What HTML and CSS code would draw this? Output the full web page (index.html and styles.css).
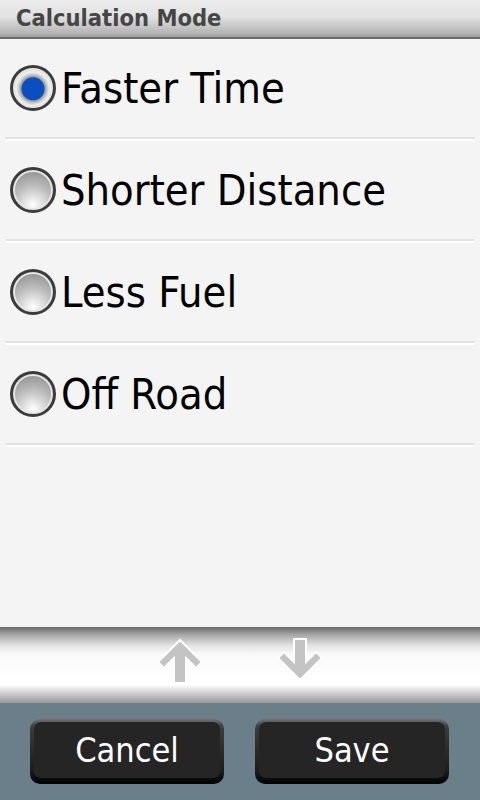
FILE: index.html
```html
<!DOCTYPE html>
<html>
<head>
<meta http-equiv="Content-Type" content="text/html;charset=utf-8" >
<title>Calculation Mode</title>
    <link rel="stylesheet" href="styles.css">
</head>
<body>
<div class="screen">
    <div class="titlebar">Calculation Mode</div>

    <div class="list">
        <div class="row">
            <span class="radio checked"></span>
            <span class="label">Faster Time</span>
        </div>
        <div class="row">
            <span class="radio"></span>
            <span class="label">Shorter Distance</span>
        </div>
        <div class="row">
            <span class="radio"></span>
            <span class="label">Less Fuel</span>
        </div>
        <div class="row">
            <span class="radio"></span>
            <span class="label">Off Road</span>
        </div>
    </div>

    <div class="scrollbar">
        <svg class="arrow" width="50" height="50" viewBox="0 0 50 50">
            <path d="M25 3 L47 25 L41 31 L31 21 L31 46 L19 46 L19 21 L9 31 L3 25 Z"/>
        </svg>
        <svg class="arrow" width="50" height="50" viewBox="0 0 50 50">
            <path d="M19 2 L31 2 L31 25 L41 15 L47 21 L25 43 L3 21 L9 15 L19 25 Z"/>
        </svg>
    </div>

    <div class="buttons">
        <button class="btn"><span class="face">Cancel</span></button>
        <button class="btn"><span class="face">Save</span></button>
    </div>
</div>
</body>
</html>
```

FILE: styles.css
```css
body{
    margin:0;
    background-color:#f4f4f4;
}

.screen{
    width:480px;
    height:800px;
    display:flex;
    flex-direction:column;
    font-family:"DejaVu Sans Condensed", "DejaVu Sans", sans-serif;
    font-stretch:condensed;
}

.titlebar{
    height:37px;
    flex:none;
    line-height:37px;
    padding-left:16px;
    font-size:23.5px;
    font-weight:bold;
    color:#464646;
    background:linear-gradient(to bottom, #ececec 0, #e2e2e2 45%, #b4b4b4 90%, #9c9c9c 100%);
    border-bottom:2px solid #6e6e6e;
}

.list{
    flex:1;
    background-color:#f4f4f4;
}

.row{
    height:98px;
    margin:0 5px 2px 5px;
    padding-left:5px;
    display:flex;
    align-items:center;
    gap:5px;
    border-bottom:2px solid #e2e2e2;
    box-shadow:0 2px 0 #ffffff;
}

.label{
    font-size:43px;
    color:#000;
}

.radio{
    width:40px;
    height:40px;
    flex:none;
    border-radius:50%;
    border:3px solid #3c3c3c;
    background:radial-gradient(circle at 50% 88%, #ffffff 0, #ededed 14%, #bdbdbd 48%, #9a9a9a 80%, #8a8a8a 100%);
    box-shadow:inset 0 0 0 2px #e6e6e6;
}

.radio.checked{
    background:radial-gradient(circle at 50% 52%, #0a4fbf 0, #0a4fbf 11px, #9a9a9a 12px, #cfcfcf 14.5px, #f2f2f2 17px, #d6d6d6 20px);
}

.scrollbar{
    height:76px;
    flex:none;
    display:flex;
    justify-content:center;
    align-items:flex-start;
    gap:70px;
    background:linear-gradient(to bottom, #686868 0, #a6a6a6 10%, #e2e2e2 24%, #fafafa 36%, #ffffff 76%, #d4d4d4 86%, #a8a8a8 96%, #9a9a9a 100%);
}

.arrow{
    margin-top:10px;
}

.arrow path{
    fill:#c4c4c4;
    stroke:#ffffff;
    stroke-width:2;
}

.buttons{
    height:81px;
    flex:none;
    display:flex;
    gap:31px;
    padding:16px 0 0 30px;
    background-color:#6b7f8b;
}

.btn{
    width:194px;
    height:65px;
    padding:3px 4px 6px 4px;
    border:0;
    border-radius:10px;
    background:linear-gradient(to bottom, #727272 0, #3c3c3c 12%, #1c1c1c 80%, #000000 100%);
    font-family:inherit;
    font-stretch:condensed;
}

.face{
    display:flex;
    align-items:center;
    justify-content:center;
    height:100%;
    border-radius:7px;
    background-color:#252525;
    color:#ffffff;
    font-size:34px;
}
```
